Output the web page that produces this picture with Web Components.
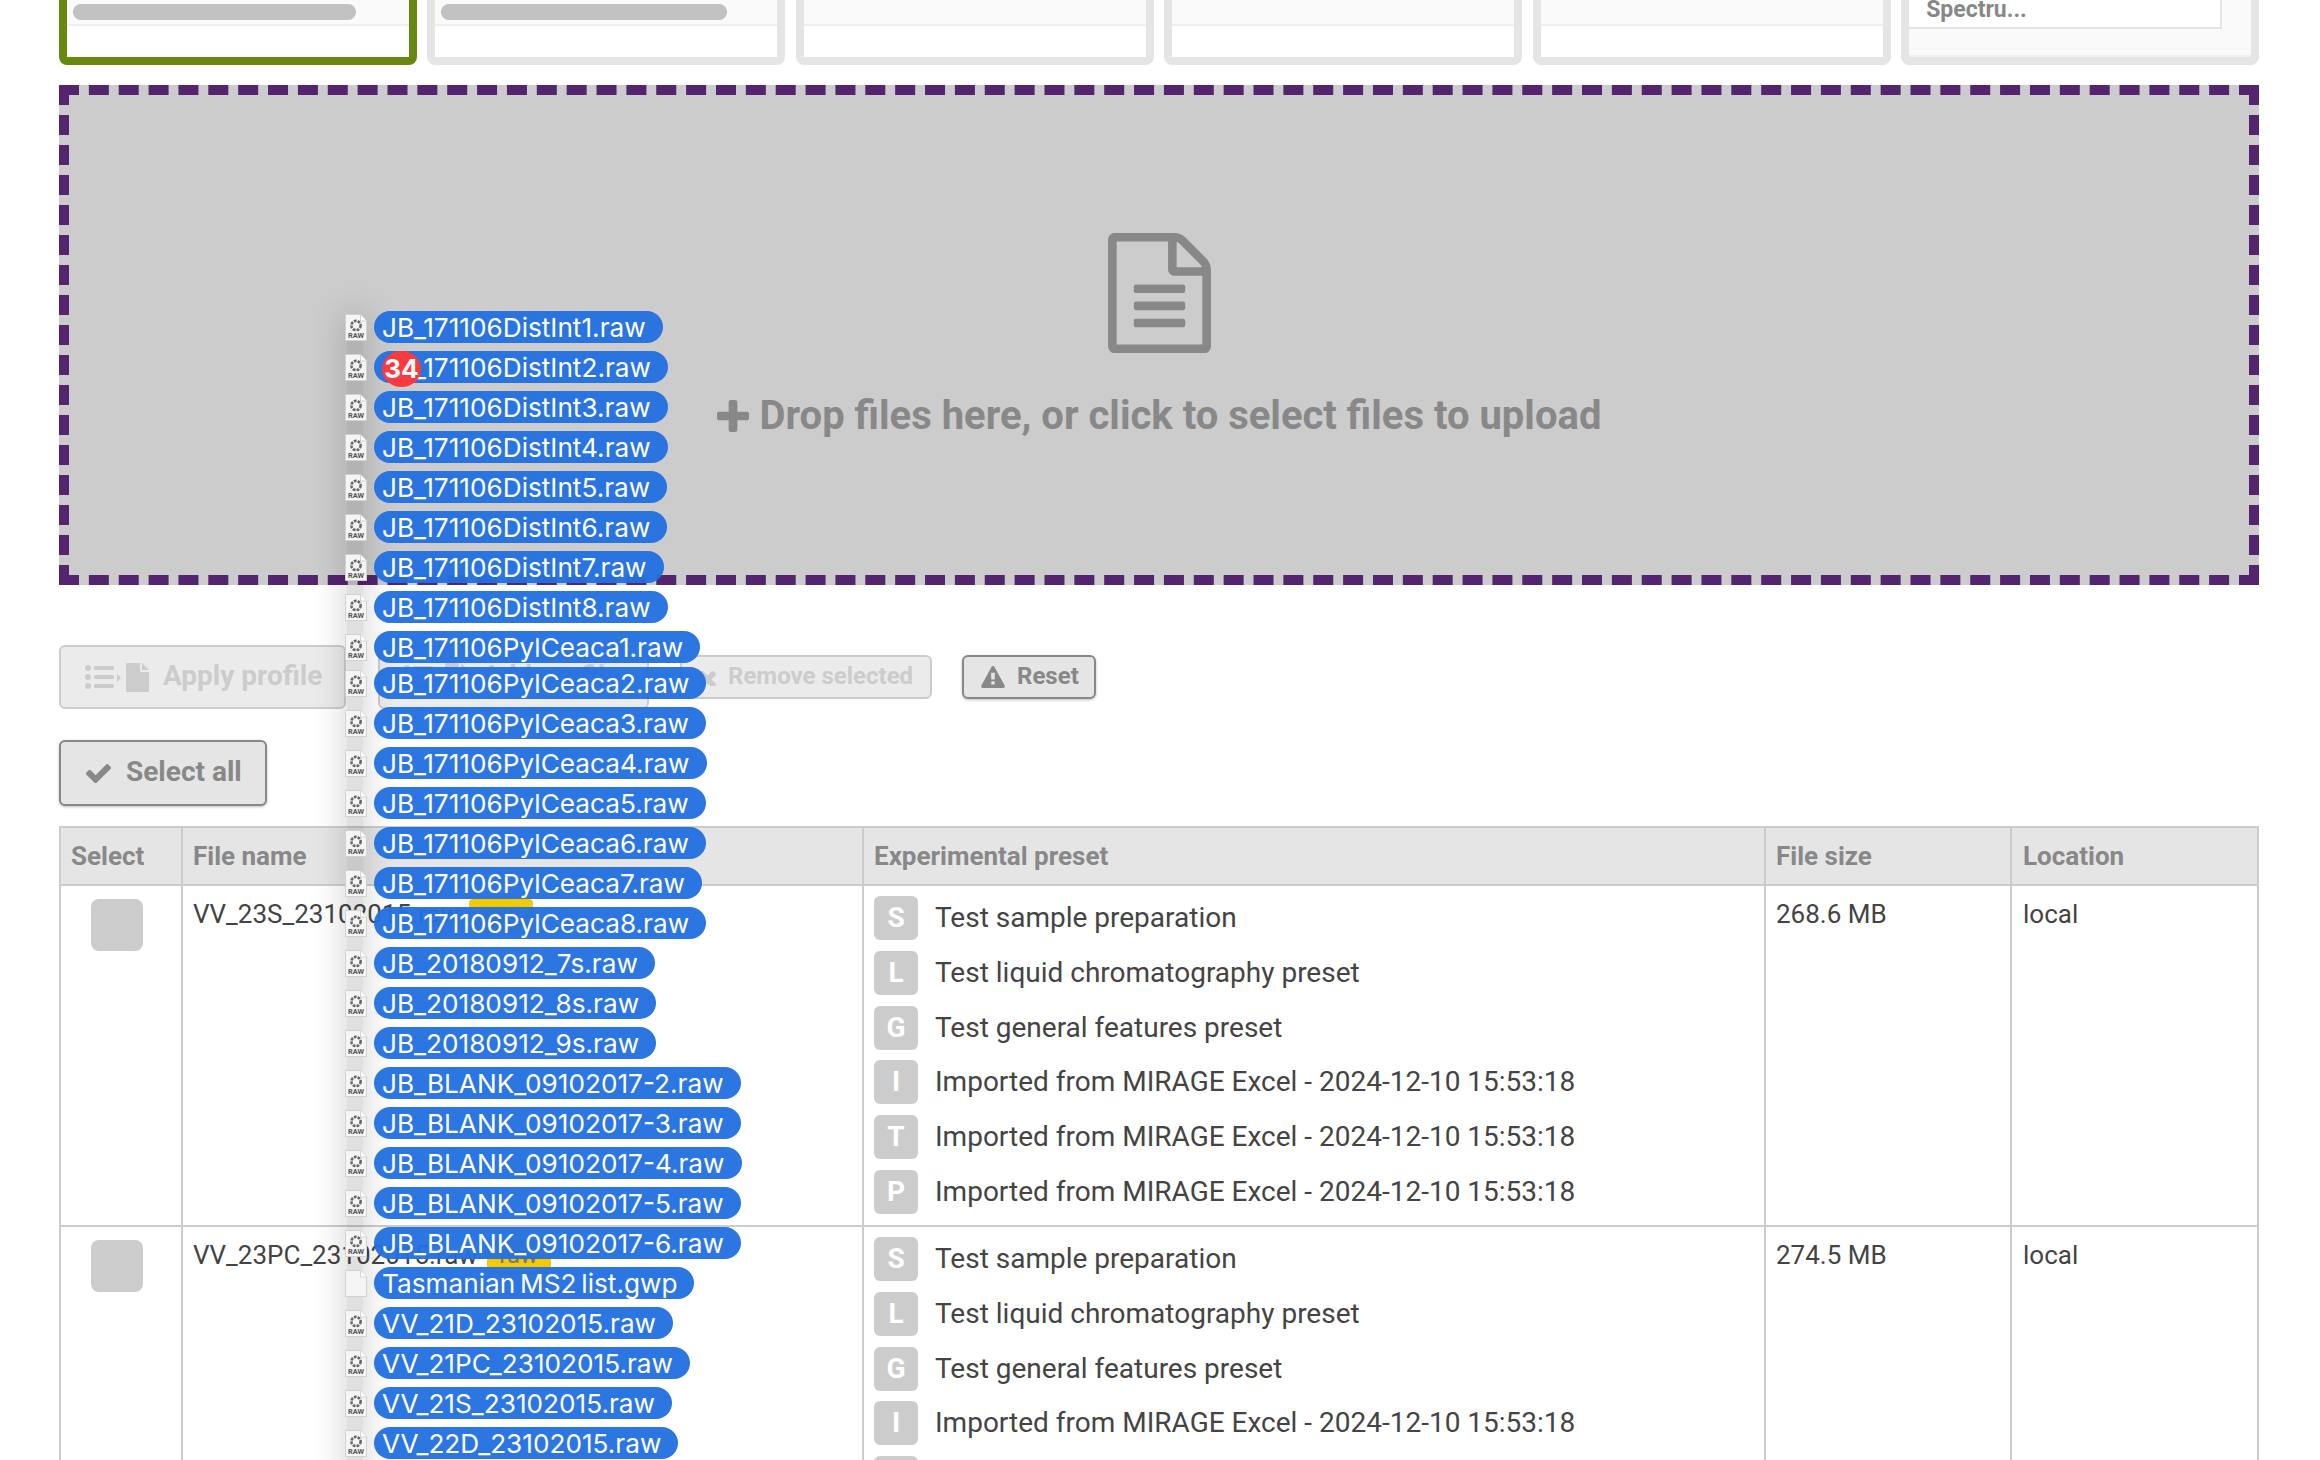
<!DOCTYPE html>
<html lang="en"><head><meta charset="utf-8"><title>Upload</title>
<style>
html,body{margin:0;padding:0;background:#fff}
body{width:2320px;height:1460px;overflow:hidden;position:relative;font-family:Roboto,"Liberation Sans",sans-serif;color:#444}
app-shell{--cols:122px 681px 902px 246px 1fr}
</style></head><body>
<app-shell>
  <card-strip>
    <preview-card selected bar="283"></preview-card>
    <preview-card bar="286"></preview-card>
    <preview-card></preview-card>
    <preview-card></preview-card>
    <preview-card></preview-card>
    <preview-card label="Spectru..."></preview-card>
  </card-strip>
  <drop-zone>Drop files here, or click to select files to upload</drop-zone>
  <button-row>
    <action-button icon="listfile" disabled size="l" style="width:287px">Apply profile</action-button>
    <action-button icon="listfile" disabled size="l" style="width:271px;margin-left:32px">Add profile</action-button>
    <action-button icon="remove" disabled style="width:252px;margin-left:31px">Remove selected</action-button>
    <action-button icon="warning" style="width:134px;margin-left:30px">Reset</action-button>
  </button-row>
  <button-row top="31">
    <action-button icon="check" size="l" style="width:208px;height:66px;padding-left:25px;gap:15px">Select all</action-button>
  </button-row>
  <file-table>
    <file-row name="VV_23S_23102015.raw" size="268.6 MB">
      <preset-item letter="S">Test sample preparation</preset-item>
      <preset-item letter="L">Test liquid chromatography preset</preset-item>
      <preset-item letter="G">Test general features preset</preset-item>
      <preset-item letter="I">Imported from MIRAGE Excel - 2024-12-10 15:53:18</preset-item>
      <preset-item letter="T">Imported from MIRAGE Excel - 2024-12-10 15:53:18</preset-item>
      <preset-item letter="P">Imported from MIRAGE Excel - 2024-12-10 15:53:18</preset-item>
    </file-row>
    <file-row name="VV_23PC_23102015.raw" size="274.5 MB">
      <preset-item letter="S">Test sample preparation</preset-item>
      <preset-item letter="L">Test liquid chromatography preset</preset-item>
      <preset-item letter="G">Test general features preset</preset-item>
      <preset-item letter="I">Imported from MIRAGE Excel - 2024-12-10 15:53:18</preset-item>
      <preset-item letter="T">Imported from MIRAGE Excel - 2024-12-10 15:53:18</preset-item>
      <preset-item letter="P">Imported from MIRAGE Excel - 2024-12-10 15:53:18</preset-item>
    </file-row>
  </file-table>
</app-shell>
<drag-overlay>
  <drag-item>JB_171106DistInt1.raw</drag-item>
  <drag-item badge="34">JB_171106DistInt2.raw</drag-item>
  <drag-item>JB_171106DistInt3.raw</drag-item>
  <drag-item>JB_171106DistInt4.raw</drag-item>
  <drag-item>JB_171106DistInt5.raw</drag-item>
  <drag-item>JB_171106DistInt6.raw</drag-item>
  <drag-item>JB_171106DistInt7.raw</drag-item>
  <drag-item>JB_171106DistInt8.raw</drag-item>
  <drag-item>JB_171106PylCeaca1.raw</drag-item>
  <drag-item tight>JB_171106PylCeaca2.raw</drag-item>
  <drag-item>JB_171106PylCeaca3.raw</drag-item>
  <drag-item>JB_171106PylCeaca4.raw</drag-item>
  <drag-item>JB_171106PylCeaca5.raw</drag-item>
  <drag-item>JB_171106PylCeaca6.raw</drag-item>
  <drag-item>JB_171106PylCeaca7.raw</drag-item>
  <drag-item>JB_171106PylCeaca8.raw</drag-item>
  <drag-item>JB_20180912_7s.raw</drag-item>
  <drag-item>JB_20180912_8s.raw</drag-item>
  <drag-item>JB_20180912_9s.raw</drag-item>
  <drag-item>JB_BLANK_09102017-2.raw</drag-item>
  <drag-item>JB_BLANK_09102017-3.raw</drag-item>
  <drag-item>JB_BLANK_09102017-4.raw</drag-item>
  <drag-item>JB_BLANK_09102017-5.raw</drag-item>
  <drag-item>JB_BLANK_09102017-6.raw</drag-item>
  <drag-item blank>Tasmanian MS2 list.gwp</drag-item>
  <drag-item>VV_21D_23102015.raw</drag-item>
  <drag-item>VV_21PC_23102015.raw</drag-item>
  <drag-item>VV_21S_23102015.raw</drag-item>
  <drag-item>VV_22D_23102015.raw</drag-item>
</drag-overlay>
<script>
const ICONS={
 file:'<svg viewBox="0 0 1536 1792" width="103" height="120" fill="#888"><path d="M1468 380q28 28 48 76t20 88v1152q0 40-28 68t-68 28h-1344q-40 0-68-28t-28-68v-1600q0-40 28-68t68-28h896q40 0 88 20t76 48zm-444-244v376h376q-10-29-22-41l-313-313q-12-12-41-22zm384 1528v-1024h-416q-40 0-68-28t-28-68v-416h-768v1536h1280zm-1024-864q0-14 9-23t23-9h704q14 0 23 9t9 23v64q0 14-9 23t-23 9h-704q-14 0-23-9t-9-23v-64zm736 224q14 0 23 9t9 23v64q0 14-9 23t-23 9h-704q-14 0-23-9t-9-23v-64q0-14 9-23t23-9h704zm0 256q14 0 23 9t9 23v64q0 14-9 23t-23 9h-704q-14 0-23-9t-9-23v-64q0-14 9-23t23-9h704z"/></svg>',
 plus:'<svg viewBox="192 128 1408 1408" width="32" height="32" fill="#888"><path d="M1600 736v192q0 40-28 68t-68 28h-416v416q0 40-28 68t-68 28h-192q-40 0-68-28t-28-68v-416h-416q-40 0-68-28t-28-68v-192q0-40 28-68t68-28h416v-416q0-40 28-68t68-28h192q40 0 68 28t28 68v416h416q40 0 68 28t28 68z"/></svg>',
 check:'<svg viewBox="121 280 1550 1214" width="25" height="20" fill="currentColor"><path d="M1671 566q0 40-28 68l-724 724-136 136q-28 28-68 28t-68-28l-136-136-362-362q-28-28-28-68t28-68l136-136q28-28 68-28t68 28l294 295 656-657q28-28 68-28t68 28l136 136q28 28 28 68z"/></svg>',
 remove:'<svg viewBox="110 288 1188 1188" width="17" height="17" fill="currentColor"><path d="M1298 1376q0 40-28 68l-136 136q-28 28-68 28t-68-28l-294-294-294 294q-28 28-68 28t-68-28l-136-136q-28-28-28-68t28-68l294-294-294-294q-28-28-28-68t28-68l136-136q28-28 68-28t68 28l294 294 294-294q28-28 68-28t68 28l136 136q28 28 28 68t-28 68l-294 294 294 294q28 28 28 68z"/></svg>',
 warning:'<svg viewBox="0 0 1792 1664" width="24" height="22" fill="currentColor"><path d="M1024 1375v-190q0-14-9.5-23.5t-22.5-9.5h-192q-13 0-22.5 9.5t-9.5 23.5v190q0 14 9.5 23.5t22.5 9.5h192q13 0 22.5-9.5t9.5-23.5zm-2-374l18-459q0-12-10-19-13-11-24-11h-220q-11 0-24 11-10 7-10 21l17 457q0 10 10 16.5t24 6.5h185q14 0 23.5-6.5t10.5-16.5zm-14-934l768 1408q35 63-2 126-17 29-46.5 46t-63.5 17h-1536q-34 0-63.5-17t-46.5-46q-37-63-2-126l768-1408q17-31 47-49t65-18 65 18 47 49z"/></svg>',
 listfile:'<svg viewBox="0 0 65 30" width="65" height="30" fill="currentColor"><circle cx="3" cy="6" r="3"/><circle cx="3" cy="15" r="3"/><circle cx="3" cy="24" r="3"/><rect x="9" y="4" width="20" height="4" rx="1"/><rect x="9" y="13" width="20" height="4" rx="1"/><rect x="9" y="22" width="20" height="4" rx="1"/><path d="M32 12l4 4-4 4z"/><path d="M41 1h14v9h9v20H41z"/><path d="M57 1l7 7h-7z"/></svg>'
};
function def(name,css,html){
  customElements.define(name,class extends HTMLElement{
    constructor(){super();this.attachShadow({mode:'open'});}
    connectedCallback(){this.shadowRoot.innerHTML='<style>'+css+'</style>'+(typeof html==='function'?html(this):html);}
  });
}
def('app-shell',':host{display:block;padding:0 61px 0 59px;box-sizing:border-box;width:2320px}','<slot></slot>');
def('card-strip',':host{display:grid;grid-template-columns:repeat(6,1fr);gap:10.6px;margin-top:-30px;height:95px}','<slot></slot>');
def('preview-card',`:host{display:block;box-sizing:border-box;height:95px;border:8px solid #e5e5e5;border-radius:8px;background:#fff;overflow:hidden}
:host([selected]){border-color:#66880e}
.head{height:24px;padding-top:22px;background:#fafafa;border-bottom:2px solid #eee;box-sizing:content-box}
.bar{height:16px;border-radius:8px;background:#c2c2c2;position:relative;top:4px;margin-left:6px}
.tall{height:79px;background:#fafafa;box-sizing:border-box;border-bottom:2px solid #f0f0f0}
.box{box-sizing:border-box;height:51px;width:313px;background:#fff;border:solid #e5e5e5;border-width:0 2px 2px 0;padding:22px 0 0 17px;font:bold 23px/20px Roboto,sans-serif;color:#888;white-space:nowrap}`,
 el=>{const l=el.getAttribute('label');if(l)return '<div class="tall"><div class="box">'+l+'</div></div>';
  const b=el.getAttribute('bar');return '<div class="head">'+(b?'<div class="bar" style="width:'+b+'px"></div>':'')+'</div>';});
def('drop-zone',`:host{display:flex;flex-direction:column;align-items:center;box-sizing:border-box;height:500px;margin-top:20px;border:10px dashed #54246f;background:#ccc;padding-top:138px;color:#888}
.icon{height:120px;display:block}.icon svg{display:block}
.t{display:flex;align-items:center;gap:11px;margin-top:39px;font:bold 40px/48px Roboto,sans-serif;white-space:nowrap}
.t svg{display:block}`,()=>'<div class="icon">'+ICONS.file+'</div><div class="t">'+ICONS.plus+'<span><slot></slot></span></div>');
def('button-row',':host{display:flex;align-items:center;margin-top:60px}:host([top]){margin-top:31px}','<slot></slot>');
def('action-button',`:host{display:inline-flex;align-items:center;box-sizing:border-box;height:44px;border:2px solid #888;border-radius:6px;background:#e5e5e5;color:#888;font:bold 24px/30px Roboto,sans-serif;white-space:nowrap;padding-left:17px;gap:12px;box-shadow:0 1px 3px rgba(0,0,0,.25);flex:none}
:host([size=l]){height:64px;font-size:28px;padding-left:24px;gap:13px}
:host([disabled]){border-color:#ccc;color:#ccc;box-shadow:none;background:#ebebeb}
span{position:relative;top:-1.500px}
:host([size=l]) span{top:-1px}
svg{display:block;flex:none}`,el=>ICONS[el.getAttribute('icon')]+'<span><slot></slot></span>');
def('file-table',`:host{display:block;margin-top:20px;border:solid #ccc;border-width:2px 2px 0}
.head{display:grid;grid-template-columns:var(--cols);height:56px;background:#e5e5e5;border-bottom:2px solid #ccc;font:bold 26px/56px Roboto,sans-serif;color:#888}
.head div{padding-left:10px;border-right:2px solid #ccc;white-space:nowrap}.head div:last-child{border-right:0;padding-left:11px}`,
 '<div class="head"><div>Select</div><div>File name</div><div>Experimental preset</div><div>File size</div><div>Location</div></div><slot></slot>');
def('file-row',`:host{display:grid;grid-template-columns:var(--cols);border-bottom:2px solid #ccc;font:26px/36px Roboto,sans-serif;color:#444}
.c{border-right:2px solid #ccc;padding:10px 0 10px 10px;box-sizing:border-box;min-width:0}
.c:last-child{border-right:0;padding-left:11px}
.sel{padding:13px 0 0 30px}
.box{width:52px;height:52px;border-radius:8px;background:#ccc}
.name{display:flex;align-items:flex-start;gap:9px;white-space:nowrap;padding-top:10px}
.tag{background:#f5c900;color:#777;border-radius:4px 4px 0 0;height:34px;line-height:30px;margin-top:3px;padding:0 12.500px;font-size:24px}
.ps{display:flex;flex-direction:column;gap:10.800px;padding-bottom:11px}`,
 el=>'<div class="c sel"><div class="box"></div></div><div class="c name"><span>'+el.getAttribute('name')+'</span><span class="tag">raw</span></div><div class="c ps"><slot></slot></div><div class="c">'+el.getAttribute('size')+'</div><div class="c">local</div>');
def('preset-item',`:host{display:flex;align-items:center;gap:17px;height:44px;font:28px/44px Roboto,sans-serif;color:#444;white-space:nowrap}
b{display:block;width:44px;height:44px;border-radius:6px;background:#ccc;color:#fff;text-align:center;font:bold 28px/44px Roboto,sans-serif}`,
 el=>'<b>'+el.getAttribute('letter')+'</b><span><slot></slot></span>');
def('drag-overlay',`:host{position:absolute;left:345px;top:311px;display:flex;flex-direction:column;gap:8px}
.shade{position:absolute;left:2px;top:6px;width:16px;height:1200px;box-shadow:0 0 30px 4px rgba(0,0,0,.17);background:rgba(0,0,0,.12)}
.w{position:relative;display:flex;flex-direction:column;gap:8px}`,'<div class="shade"></div><div class="w"><slot></slot></div>');
const AP='<g fill="none" stroke="#666"><circle cx="11" cy="11.5" r="4.6" stroke-width="2.6" stroke-dasharray="2.7 1.1"/></g>';
def('drag-item',`:host{position:relative;display:flex;align-items:center;height:32px;gap:7px}
:host([tight]){margin-top:-4px}
svg{display:block;flex:none;width:22px;height:27px}
.p{display:block;height:32px;box-sizing:border-box;padding:0 17px 0 8px;border-radius:16px;background:rgba(35,112,224,.96);color:#fff;font:26.200px/33px Inter,"Liberation Sans",sans-serif;word-spacing:-2.500px;white-space:nowrap}
.n{position:absolute;left:37px;top:0;width:39px;height:36px;border-radius:50%;background:#fb3a40;color:#fff;text-align:center;font:bold 26px/36px Inter,"Liberation Sans",sans-serif}`,
 el=>{const blank=el.hasAttribute('blank');const b=el.getAttribute('badge');
  return '<svg viewBox="0 0 22 27"><path d="M.5.5h15l6 6.5v19.500H.5z" fill="#f5f5f5" stroke="#d2d2d2"/><path d="M15.500.5v6.500h6" fill="#fff" stroke="#d2d2d2"/>'+(blank?'':AP+'<text x="11" y="24" text-anchor="middle" font-family="Roboto,sans-serif" font-size="7.500" font-weight="700" fill="#555">RAW</text>')+'</svg><span class="p"><slot></slot></span>'+(b?'<span class="n">'+b+'</span>':'');});
</script>
</body></html>
